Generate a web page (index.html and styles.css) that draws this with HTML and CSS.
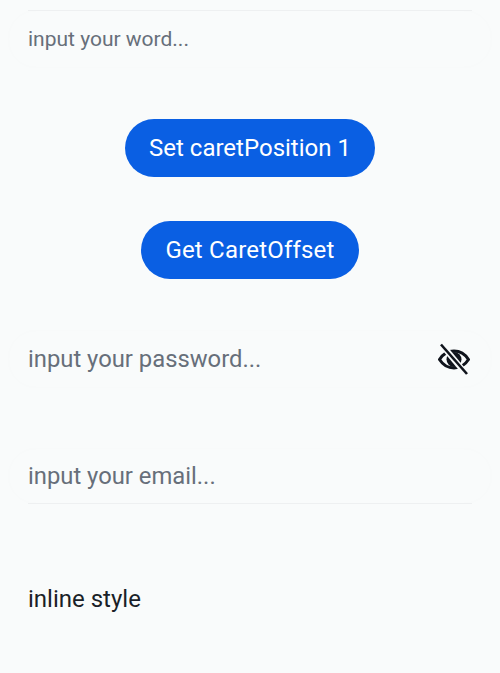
FILE: index.html
```html
<!DOCTYPE html>
<html lang="en">
<head>
  <meta charset="UTF-8"/>
  <meta name="viewport" content="width=device-width, initial-scale=1.0"/>
  <title>Caret demo</title>
  <link rel="stylesheet" href="styles.css">
</head>
<body>
  <div class="field field-word">
    <span class="placeholder placeholder-small">input your word...</span>
  </div>

  <div class="actions">
    <button class="btn">Set caretPosition 1</button>
    <button class="btn btn-offset">Get CaretOffset</button>
  </div>

  <div class="field field-password">
    <span class="placeholder">input your password...</span>
    <svg class="eye" viewBox="0 0 32 32" width="32" height="32">
      <path d="M1.5 16.5C5 11 10 8 16 8s11 3 14.5 8.5C27 22 22 25 16 25S5 22 1.5 16.5Z" fill="none" stroke="#10141c" stroke-width="3"/>
      <circle cx="16" cy="16.5" r="7.5" fill="#10141c"/>
      <path d="M4 2 28 31" stroke="#f9fbfb" stroke-width="6"/>
      <path d="M3 1.5 29 31" stroke="#10141c" stroke-width="2.6"/>
    </svg>
  </div>

  <div class="field field-email">
    <span class="placeholder">input your email...</span>
  </div>

  <p class="inline-style">inline style</p>
</body>
</html>
```

FILE: styles.css
```css
body {
  margin: 0;
  height: 673px;
  overflow: hidden;
  background-color: #f9fbfb;
  font-family: Roboto, sans-serif;
}
.field {
  position: relative;
  display: flex;
  align-items: center;
  justify-content: space-between;
  margin: 0 8px;
  padding: 0 19px;
  border: 1px solid #f8fafa;
  border-radius: 28px;
}
/* the rule only runs between the rounded corners */
.field-word::before,
.field-email::after {
  content: "";
  position: absolute;
  left: 19px;
  right: 19px;
  height: 1px;
  background-color: #eef0f1;
}
.field-word::before {
  top: -1px;
}
.field-email::after {
  bottom: -1px;
}
.field-word {
  margin-top: 10px;
  height: 56px;
}
.placeholder {
  color: #676f7a;
  font-size: 23.8px;
}
.placeholder-small {
  font-size: 21px;
}
.actions {
  display: flex;
  flex-direction: column;
  align-items: center;
  gap: 44px;
  margin-top: 51px;
}
.btn {
  height: 58px;
  padding: 0 24px;
  border: none;
  border-radius: 29px;
  background-color: #0a5fe3;
  color: white;
  font-family: inherit;
  font-size: 24px;
}
.btn-offset {
  letter-spacing: 0.2px;
}
.field-password {
  margin-top: 51px;
  height: 56px;
}
.eye {
  margin-right: 2px;
}
.field-email {
  margin-top: 60px;
  height: 54px;
}
.inline-style {
  margin: 81px 28px 0;
  color: #1a1f28;
  font-size: 24px;
}
```
